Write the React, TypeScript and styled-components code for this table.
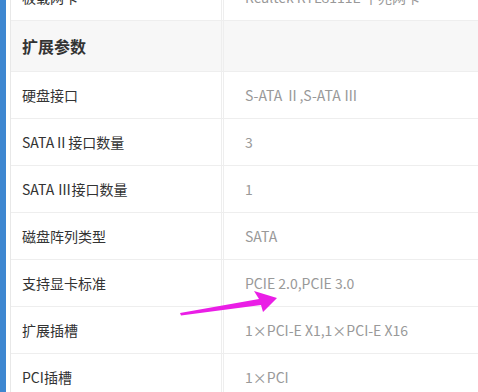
import React from "react";
import styled, { createGlobalStyle } from "styled-components";

const GlobalStyle = createGlobalStyle`
  html, body {
    margin: 0;
    padding: 0;
    background: #fff;
    overflow: hidden;
  }
  body {
    font-family: "Noto Sans CJK SC", "Noto Sans", sans-serif;
  }
`;

type Spec = { label: string; value: string };

const specs: Spec[] = [
  { label: "硬盘接口", value: "S-ATA Ⅱ,S-ATA Ⅲ" },
  { label: "SATAⅡ接口数量", value: "3" },
  { label: "SATA Ⅲ接口数量", value: "1" },
  { label: "磁盘阵列类型", value: "SATA" },
  { label: "支持显卡标准", value: "PCIE 2.0,PCIE 3.0" },
  { label: "扩展插槽", value: "1×PCI-E X1,1×PCI-E X16" },
  { label: "PCI插槽", value: "1×PCI" },
];

function App() {
  return (
    <>
      <GlobalStyle />
      <Page>
        <SideBar />
        <Table>
          <Row>
            <Label>板载网卡</Label>
            <Value>Realtek RTL8111E 千兆网卡</Value>
          </Row>
          <Row $head>
            <GroupTitle>扩展参数</GroupTitle>
            <Value />
          </Row>
          {specs.map(s => (
            <Row key={s.label}>
              <Label>{s.label}</Label>
              <Value>{s.value}</Value>
            </Row>
          ))}
        </Table>
        <Arrow width="110" height="30" viewBox="0 0 110 30">
          <polygon points="0,24 79,10 74,2 97,9 83,23 81,16 1,26.5" fill="#ea1ee6" />
        </Arrow>
      </Page>
    </>
  );
}

export default App;

const Page = styled.div`
  position: relative;
  display: flex;
  height: 392px;
  overflow: hidden;
`;

const SideBar = styled.div`
  width: 6px;
  flex: none;
  background: #3d87d1;
`;

const Table = styled.div`
  flex: 1;
  margin: -26px 0 0 4px;
  border-left: 1px solid #e8e8e8;
`;

const Row = styled.div<{ $head?: boolean }>`
  display: grid;
  grid-template-columns: 213px 1fr;
  height: ${p => (p.$head ? 51 : 47)}px;
  border-bottom: 1px solid #eeeeee;
  box-sizing: border-box;
  background: ${p => (p.$head ? "#f7f7f7" : "#fff")};
`;

const Cell = styled.div`
  display: flex;
  align-items: center;
  padding-left: 11px;
  font-size: 14px;
  white-space: nowrap;
`;

const Label = styled(Cell)`
  color: #333;
  border-right: 3px double #eeeeee;
`;

const GroupTitle = styled(Cell)`
  color: #333;
  font-size: 16px;
  font-weight: bold;
  border-right: 3px double #eeeeee;
`;

const Value = styled(Cell)`
  color: #999;
  padding-left: 21px;
`;

const Arrow = styled.svg`
  position: absolute;
  left: 180px;
  top: 289px;
`;
